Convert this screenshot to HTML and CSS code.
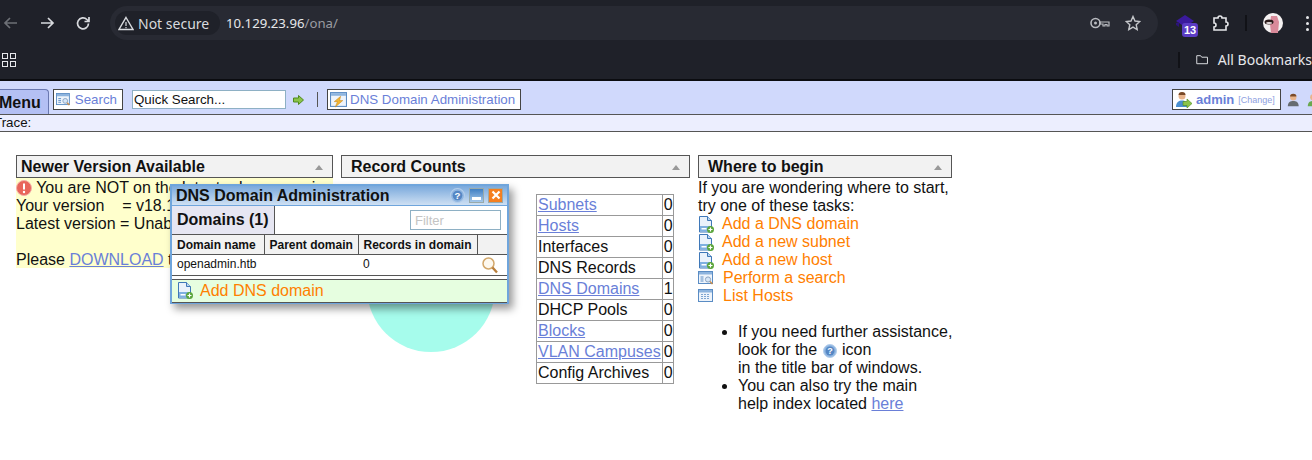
FILE: index.html
```html
<!DOCTYPE html>
<html lang="en">
  <head>
    <meta charset="UTF-8" />
    <title>OpenNetAdmin</title>
    <link rel="stylesheet" href="styles.css">
  </head>
  <body>
    <svg class="defs" width="0" height="0">
      <defs>
        <symbol id="i-add" viewBox="0 0 16 17">
          <path d="M1.500 .5h8l4 4v11.500h-12z" fill="#eaf2fb" stroke="#3f78b8"/>
          <path d="M9.500 .5v4h4" fill="#bcd6ee" stroke="#3f78b8"/>
          <rect x="2" y="10" width="11" height="5.500" fill="#7fb0e0"/>
          <rect x="3.500" y="12" width="5" height="1.500" fill="#fff"/>
          <circle cx="12.500" cy="13.500" r="3.500" fill="#5aa53a"/>
          <path d="M10.500 13.500h4M12.500 11.500v4" stroke="#fff" stroke-width="1.200"/>
        </symbol>
        <symbol id="i-search" viewBox="0 0 16 16">
          <rect x=".5" y="1.500" width="14" height="12" fill="#eef4fb" stroke="#5a8cc4"/>
          <rect x="1" y="2" width="13" height="2.500" fill="#8db4de"/>
          <path d="M2.500 7h3M2.500 9h3M2.500 11h3" stroke="#5a8cc4"/>
          <circle cx="10" cy="9.500" r="2.600" fill="#d5e5f6" stroke="#8aa4c2"/>
          <path d="M12 11.500l2.500 2.500" stroke="#c98c4a" stroke-width="1.500"/>
        </symbol>
        <symbol id="i-help" viewBox="0 0 14 14">
          <circle cx="7" cy="7" r="6.500" fill="#8fb5e0" stroke="#b5cfec"/>
          <circle cx="7" cy="7" r="4.500" fill="#5587c4"/>
          <text x="7" y="10" text-anchor="middle" class="help-mark">?</text>
        </symbol>
      </defs>
    </svg>

    <header class="browser">
      <div class="tabbar">
        <svg class="nav-icon" width="18" height="18" viewBox="0 0 18 18"><path d="M15 9H3M8 4L3 9l5 5" fill="none" stroke="#6d7076" stroke-width="1.700"/></svg>
        <svg class="nav-icon" width="18" height="18" viewBox="0 0 18 18"><path d="M3 9h12M10 4l5 5-5 5" fill="none" stroke="#d8dade" stroke-width="1.700"/></svg>
        <svg class="nav-icon" width="18" height="18" viewBox="0 0 18 18"><path d="M14.500 9.500a5.500 5.500 0 1 1-1.600-4L15 7.500M15 3v4.500h-4.500" fill="none" stroke="#d8dade" stroke-width="1.700"/></svg>
        <div class="omnibox">
          <div class="chip">
            <svg width="16" height="15" viewBox="0 0 16 15"><path d="M8 1.500L15 13.500H1z" fill="none" stroke="#d8dade" stroke-width="1.400"/><path d="M8 6v4M8 11v1.200" stroke="#d8dade" stroke-width="1.200"/></svg>
            <span>Not secure</span>
          </div>
          <span class="url">10.129.23.96<span class="url-path">/ona/</span></span>
          <span class="omni-right">
            <svg width="20" height="12" viewBox="0 0 20 12"><circle cx="5.500" cy="6" r="4.500" fill="none" stroke="#b9bbc0" stroke-width="1.600"/><circle cx="5.500" cy="6" r="1.500" fill="#b9bbc0"/><path d="M10 5h9v4h-2V7.500h-2V9h-2V7h-3z" fill="none" stroke="#b9bbc0" stroke-width="1.200"/></svg>
            <svg width="16" height="16" viewBox="0 0 16 16"><path d="M8 1.500l2 4.500 4.800.500-3.600 3.200 1 4.800L8 12.100l-4.200 2.400 1-4.800L1.200 6.500 6 6z" fill="none" stroke="#c4c6ca" stroke-width="1.400"/></svg>
          </span>
        </div>
        <div class="ext-badge">
          <svg class="ext-shape" width="18" height="16" viewBox="0 0 18 16"><path d="M0 6L9 0l9 6-9 6z" fill="#3a1a9c"/><path d="M0 8l3-1v5l-3-2z" fill="#2c1478"/></svg>
          <span class="badge-num">13</span>
        </div>
        <svg class="puzzle" width="18" height="18" viewBox="0 0 18 18"><path d="M2 4h4a2 2 0 0 1 4 0h4v4a2 2 0 0 1 0 4v4H2v-3a2 2 0 0 0 0-4z" fill="none" stroke="#e6e7ea" stroke-width="1.600"/></svg>
        <span class="tb-sep"></span>
        <svg class="avatar" width="20" height="20" viewBox="0 0 20 20"><circle cx="10" cy="10" r="10" fill="#f4f1f1"/><path d="M8 3h6l2 6-1 11H8L7 11z" fill="#d98a9a"/><ellipse cx="6" cy="9" rx="4.500" ry="2.500" fill="#2a1a1a"/><ellipse cx="6" cy="10" rx="3" ry="1" fill="#e8e0e0"/></svg>
        <span class="kebab"><i></i><i></i><i></i></span>
      </div>
      <div class="bookmarks">
        <span class="apps"><i></i><i></i><i></i><i></i></span>
        <span class="bm-sep"></span>
        <svg width="16" height="13" viewBox="0 0 16 13"><path d="M1 1.500h5l1.500 2H15v8.500H1z" fill="none" stroke="#d8dade" stroke-width="1.300"/></svg>
        <span class="bm-label">All Bookmarks</span>
      </div>
    </header>

    <div class="menubar">
      <div class="menu-tab">Menu</div>
      <a class="tool-btn search-btn"><svg width="17" height="17"><use href="#i-search"/></svg>Search</a>
      <input class="quick-search" type="text" value="Quick Search..." />
      <svg class="go" width="11" height="10" viewBox="0 0 11 10"><path d="M.5 3h5V.5L10.500 5l-5 4.500V7h-5z" fill="#8bc34a" stroke="#4f8a1f"/></svg>
      <span class="menu-sep"></span>
      <a class="tool-btn dns-btn"><svg width="17" height="17" viewBox="0 0 16 16"><rect x=".5" y="1.500" width="15" height="13" fill="#eef4fb" stroke="#5a8cc4"/><rect x="1" y="2" width="14" height="2.500" fill="#8db4de"/><path d="M10 5L4 10h3l-2 5 7-6H9z" fill="#f2b632" stroke="#c9861c" stroke-width=".5"/></svg>DNS Domain Administration</a>
      <div class="menu-right">
        <a class="tool-btn user-btn">
          <svg width="17" height="17" viewBox="0 0 17 17"><circle cx="7" cy="5" r="3.500" fill="#e8b48c"/><path d="M3.500 4a3.500 3 0 0 1 7 0z" fill="#7a4a28"/><path d="M1 16c0-5 3-6.500 6-6.500S13 11 13 16z" fill="#4a8fd0"/><path d="M8 10.500h4V8l5 4.500L12 17v-2.500H8z" fill="#8bc34a" stroke="#4f8a1f" stroke-width=".6"/></svg>
          <b>admin</b><small>[Change]</small>
        </a>
        <svg width="16" height="16" viewBox="0 0 16 16"><circle cx="8" cy="5" r="3.500" fill="#e8b48c"/><path d="M4.500 4a3.500 3 0 0 1 7 0z" fill="#7a4a28"/><path d="M2 15c0-5 3-6 6-6s6 1 6 6z" fill="#666b70"/></svg>
        <svg width="16" height="16" viewBox="0 0 16 16"><circle cx="8" cy="5" r="3.500" fill="#e8b48c"/><path d="M2 15c0-5 3-6 6-6s6 1 6 6z" fill="#6aa84f"/></svg>
      </div>
    </div>
    <div class="trace">Trace:</div>

    <main class="desktop">
      <section class="panel panel-version">
        <h2 class="panel-title">Newer Version Available<span class="caret"></span></h2>
        <div class="notice">
          <svg class="notice-icon" width="16" height="16" viewBox="0 0 16 16"><circle cx="8" cy="8" r="7.500" fill="#e8655a" stroke="#f3b0a8"/><path d="M8 3.500v6" stroke="#fff" stroke-width="2"/><circle cx="8" cy="12" r="1.200" fill="#fff"/></svg>
          You are NOT on the latest release version<br>
          Your version &nbsp;&nbsp;&nbsp;= v18.1.1<br>
          Latest version = Unable to determine<br>
          <br>
          Please <a href="#">DOWNLOAD</a> the latest
        </div>
      </section>

      <section class="panel panel-counts">
        <h2 class="panel-title title-indent">Record Counts<span class="caret"></span></h2>
        <div class="counts-body">
          <div class="pie"></div>
          <table class="counts">
            <tr><td><a href="#">Subnets</a></td><td>0</td></tr>
            <tr><td><a href="#">Hosts</a></td><td>0</td></tr>
            <tr><td>Interfaces</td><td>0</td></tr>
            <tr><td>DNS Records</td><td>0</td></tr>
            <tr><td><a href="#">DNS Domains</a></td><td>1</td></tr>
            <tr><td>DHCP Pools</td><td>0</td></tr>
            <tr><td><a href="#">Blocks</a></td><td>0</td></tr>
            <tr><td><a href="#">VLAN Campuses</a></td><td>0</td></tr>
            <tr><td>Config Archives</td><td>0</td></tr>
          </table>
        </div>
      </section>

      <section class="panel panel-begin">
        <h2 class="panel-title title-indent">Where to begin<span class="caret"></span></h2>
        <p class="intro">If you are wondering where to start,<br>try one of these tasks:</p>
        <ul class="tasks">
          <li><svg width="16" height="17"><use href="#i-add"/></svg><a>Add a DNS domain</a></li>
          <li><svg width="16" height="17"><use href="#i-add"/></svg><a>Add a new subnet</a></li>
          <li><svg width="16" height="17"><use href="#i-add"/></svg><a>Add a new host</a></li>
          <li class="wide"><svg width="16" height="16"><use href="#i-search"/></svg><a>Perform a search</a></li>
          <li class="wide"><svg width="16" height="14" viewBox="0 0 16 14"><rect x=".5" y=".5" width="14" height="12" fill="#eef4fb" stroke="#5a8cc4"/><rect x="1" y="1" width="13" height="2.500" fill="#8db4de"/><path d="M3 5.500h9M3 7.500h9M3 9.500h9" stroke="#7fa6d2" stroke-dasharray="2 1"/></svg><a>List Hosts</a></li>
        </ul>
        <ul class="help">
          <li>If you need further assistance,<br>look for the <svg class="help-inline" width="14" height="14"><use href="#i-help"/></svg> icon<br>in the title bar of windows.</li>
          <li>You can also try the main<br>help index located <a href="#">here</a></li>
        </ul>
      </section>

      <div class="window">
        <div class="win-title">
          <span>DNS Domain Administration</span>
          <svg class="win-help" width="15" height="15"><use href="#i-help"/></svg>
          <span class="win-btn win-min"></span>
          <span class="win-btn win-close">
            <svg width="10" height="10" viewBox="0 0 10 10"><path d="M1.500 1.500l7 7M8.500 1.500l-7 7" stroke="#fff" stroke-width="2.200"/></svg>
          </span>
        </div>
        <div class="win-head">
          <div class="win-tab">Domains (1)</div>
          <input class="filter" type="text" placeholder="Filter" />
        </div>
        <table class="grid">
          <tr><th class="col-name">Domain name</th><th class="col-parent">Parent domain</th><th class="col-records">Records in domain</th><th></th></tr>
          <tr>
            <td>openadmin.htb</td><td></td><td>0</td>
            <td class="cell-icon"><svg width="16" height="17" viewBox="0 0 16 17"><circle cx="6.500" cy="6.500" r="5.500" fill="#fdf8ee" stroke="#d2a76a" stroke-width="1.500"/><path d="M10.500 10.500l4.500 5" stroke="#b97f3c" stroke-width="2.400"/></svg></td>
          </tr>
        </table>
        <div class="win-foot"><svg width="16" height="17"><use href="#i-add"/></svg><a>Add DNS domain</a></div>
      </div>
    </main>
  </body>
</html>
```

FILE: styles.css
```css
* {
  box-sizing: border-box;
}

html,
body {
  height: 460px;
  overflow: hidden;
}

body {
  margin: 0;
  background-color: #ffffff;
  font-family: "Liberation Sans", Arial, sans-serif;
  font-size: 16px;
  color: #111;
}

a {
  color: #6a7fd8;
}

.defs {
  display: block;
  height: 0;
}

.help-mark {
  font: bold 9px "Liberation Sans", sans-serif;
  fill: #fff;
}

/* browser chrome */
.browser {
  background-color: #1f2129;
  height: 81px;
  border-bottom: 2px solid #0b0c10;
  color: #e6e7ea;
}

.tabbar {
  height: 40px;
  display: flex;
  align-items: center;
  padding: 6px 0 0 2px;
}

.nav-icon {
  margin-right: 18px;
}

.omnibox {
  width: 1048px;
  height: 34px;
  padding-left: 5px;
  border-radius: 17px;
  background-color: #282a33;
  display: flex;
  align-items: center;
}

.chip {
  height: 24px;
  width: 105px;
  padding-left: 3px;
  border-radius: 12px;
  background-color: #1f2129;
  display: flex;
  align-items: center;
  gap: 4px;
  font-family: "Noto Sans", sans-serif;
  font-size: 14px;
  color: #d8dade;
}

.url {
  margin-left: 6px;
  font-family: "Noto Sans", sans-serif;
  font-size: 13.200px;
}

.url-path {
  color: #9a9ca2;
}

.omni-right {
  margin-left: auto;
  padding-right: 17px;
  display: flex;
  align-items: center;
  gap: 15px;
}

.ext-badge {
  position: relative;
  width: 24px;
  height: 24px;
  margin-left: 18px;
  padding-top: 4px;
}

.ext-shape {
  display: block;
}

.badge-num {
  position: absolute;
  left: 6px;
  top: 12px;
  width: 16px;
  height: 14px;
  border-radius: 3px;
  background-color: #5b3cc4;
  color: #fff;
  font-size: 11px;
  font-weight: bold;
  line-height: 14px;
  text-align: center;
}

.puzzle {
  margin-left: 12px;
}

.tb-sep {
  width: 2px;
  height: 16px;
  margin-left: 15px;
  background-color: #111217;
}

.avatar {
  margin-left: 16px;
}

.kebab {
  margin-left: 23px;
  display: flex;
  flex-direction: column;
  gap: 3px;
}

.kebab i {
  width: 3px;
  height: 3px;
  border-radius: 50%;
  background-color: #e6e7ea;
}

.bookmarks {
  height: 39px;
  display: flex;
  align-items: center;
  padding-left: 2px;
}

.apps {
  width: 14px;
  display: grid;
  grid-template-columns: 6px 6px;
  gap: 2px;
}

.apps i {
  height: 6px;
  border: 1.500px solid #e6e7ea;
}

.bm-sep {
  width: 2px;
  height: 16px;
  margin-left: 1162px;
  margin-right: 16px;
  background-color: #111217;
}

.bm-label {
  margin-left: 10px;
  font-family: "Noto Sans", sans-serif;
  font-size: 14px;
  white-space: nowrap;
}

/* app menu bar */
.menubar {
  height: 34px;
  background-color: #d0d9fc;
  border-bottom: 1px solid #555;
  display: flex;
  align-items: flex-end;
  padding-bottom: 4px;
  font-size: 13.330px;
}

.menu-tab {
  width: 50px;
  height: 25px;
  margin-left: -1px;
  margin-bottom: -4px;
  background-color: #b4c0f4;
  border: 1px solid #6a78b0;
  border-bottom: none;
  border-left: none;
  border-radius: 0 4px 0 0;
  font-size: 16px;
  font-weight: bold;
  line-height: 26px;
}

.tool-btn {
  height: 21px;
  display: flex;
  align-items: center;
  gap: 4px;
  padding: 0 5px 0 2px;
  background-color: #fff;
  border: 1px solid #444;
  color: #6a7fd8;
  white-space: nowrap;
}

.search-btn {
  margin-left: 4px;
  width: 70px;
}

.dns-btn {
  gap: 3px;
}

.quick-search {
  width: 154px;
  height: 19px;
  margin: 0 0 1px 9px;
  padding: 0 1px;
  border: 1px solid #8eb0c4;
  font-family: "Liberation Sans", sans-serif;
  font-size: 13.330px;
  color: #111;
}

.go {
  margin: 0 0 5px 7px;
}

.menu-sep {
  width: 1px;
  height: 15px;
  margin: 0 9px 3px 13px;
  background-color: #555;
}

.menu-right {
  margin-left: auto;
  margin-right: -8px;
  display: flex;
  align-items: center;
  gap: 5px;
  width: 148px;
}

.user-btn {
  width: 109px;
  flex-shrink: 0;
}

.user-btn b {
  font-size: 13px;
}

.user-btn small {
  font-size: 9px;
  color: #8ea0e0;
}

.trace {
  height: 17px;
  background-color: #eceefe;
  border-bottom: 1px solid #555;
  font-size: 13.330px;
  line-height: 16px;
  text-indent: -6px;
}

/* dashboard */
.desktop {
  position: relative;
  padding: 23px 0 0 16px;
  display: flex;
  gap: 8px;
  align-items: flex-start;
  line-height: 18px;
}

.panel-version {
  width: 317px;
}

.panel-counts {
  width: 349px;
}

.panel-begin {
  width: 254px;
}

.panel-title {
  position: relative;
  height: 23px;
  margin: 0;
  padding-left: 4px;
  background-color: #f2f2f2;
  border: 1px solid #555;
  font-size: 16px;
  font-weight: bold;
  line-height: 21px;
}

.title-indent {
  padding-left: 9px;
}

.caret {
  position: absolute;
  right: 9px;
  top: 9px;
  border: 4px solid transparent;
  border-top: none;
  border-bottom: 5px solid #999;
}

.notice {
  height: 90px;
  padding-top: 1px;
  background-color: #ffffcc;
  white-space: nowrap;
  overflow: hidden;
}

.notice-icon {
  vertical-align: -3px;
}

.counts-body {
  display: flex;
  align-items: flex-start;
  padding: 16px 0 0 26px;
}

.pie {
  width: 128px;
  height: 128px;
  margin-top: 30px;
  border-radius: 50%;
  background-color: #a6fcec;
}

.counts {
  margin-left: 41px;
  border-collapse: collapse;
  border: 1px solid #999;
  line-height: 20px;
}

.counts td {
  height: 21px;
  padding: 0 1px;
  border: 1px solid #999;
  white-space: nowrap;
}

.counts td:last-child {
  padding-right: 0;
}

.intro {
  margin: 1px 0 0;
}

.tasks {
  margin: 0;
  padding: 0;
  list-style: none;
}

.tasks li {
  height: 18px;
  display: flex;
  align-items: center;
  gap: 8px;
}

.tasks li.wide {
  gap: 9px;
}

.tasks a,
.win-foot a {
  color: #ff8000;
}

.help {
  margin: 18px 0 0;
  padding-left: 40px;
  white-space: nowrap;
}

.help-inline {
  vertical-align: -3px;
  margin: 0 1px;
}

/* floating window */
.window {
  position: absolute;
  left: 170px;
  top: 52px;
  width: 339px;
  height: 120px;
  background-color: #fff;
  border: 2px solid #6fa5dc;
  box-shadow: 4px 5px 8px rgba(0, 0, 0, 0.4);
}

.win-title {
  height: 20px;
  display: flex;
  align-items: center;
  gap: 4px;
  padding: 0 4px 1px;
  background: linear-gradient(#7aa9dc, #cfe0f3);
  border-bottom: 1px solid #6fa5dc;
  font-size: 16px;
  font-weight: bold;
  line-height: 17px;
}

.win-title > span:first-child {
  flex: 1;
}

.win-btn {
  width: 15px;
  height: 15px;
  display: flex;
  align-items: center;
  justify-content: center;
  border: 1px solid #9aa;
}

.win-min {
  background: linear-gradient(#3f7fc4, #a5c8ea);
  position: relative;
}

.win-min::after {
  content: "";
  position: absolute;
  left: 2px;
  bottom: 2px;
  width: 9px;
  height: 3px;
  background-color: #fff;
}

.win-close {
  background-color: #f57f20;
}

.win-head {
  height: 29px;
  display: flex;
  align-items: flex-start;
  justify-content: space-between;
  padding-right: 6px;
  border-bottom: 1px solid #555;
}

.win-tab {
  height: 28px;
  padding: 0 5px;
  background-color: #e6e6f2;
  border-right: 1px solid #555;
  font-size: 16px;
  font-weight: bold;
  line-height: 27px;
}

.filter {
  width: 91px;
  height: 20px;
  margin-top: 4px;
  padding: 0 4px;
  border: 1px solid #8eb0c4;
  font-family: "Liberation Sans", sans-serif;
  font-size: 13px;
}

.filter::placeholder {
  color: #c4c4c4;
}

.grid {
  width: 100%;
  border-collapse: collapse;
  font-size: 12px;
  line-height: 14px;
}

.grid th {
  height: 19px;
  padding: 1px 0 0 5px;
  background-color: #f2f2f2;
  border-right: 1px solid #555;
  border-bottom: 1px solid #555;
  text-align: left;
}

.grid th:last-child {
  border-right: none;
}

.grid td {
  height: 21px;
  padding: 0 0 1px 5px;
  border-bottom: 1px solid #555;
}

.col-name {
  width: 92px;
}

.col-parent {
  width: 94px;
}

.col-records {
  width: 119px;
}

.grid td.cell-icon {
  padding: 2px 0 0 5px;
  line-height: 0;
}

.win-foot {
  height: 24px;
  margin-top: 3px;
  display: flex;
  align-items: center;
  gap: 7px;
  padding-left: 5px;
  background-color: #e6fee0;
  border-top: 1px solid #555;
  border-bottom: 1px solid #555;
}
```
